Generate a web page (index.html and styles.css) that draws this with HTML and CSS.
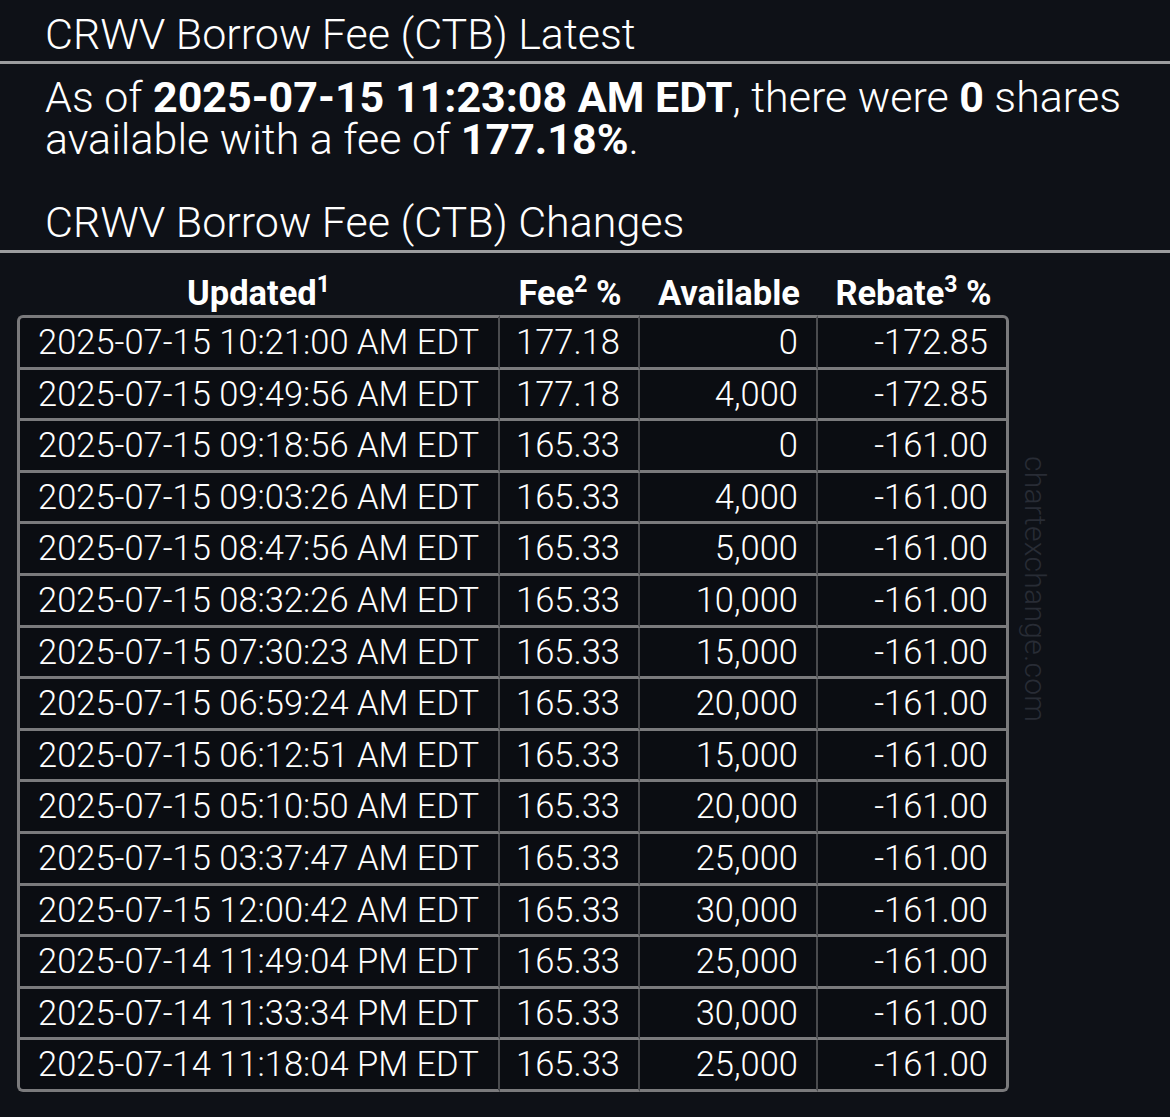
FILE: index.html
```html
<!DOCTYPE html>
<html lang="en">
<head>
<meta charset="utf-8">
<title>CRWV Borrow Fee (CTB)</title>
<link rel="stylesheet" href="styles.css">
</head>
<body>
<div class="page">
  <h2 class="section-title first">CRWV Borrow Fee (CTB) Latest</h2>
  <p class="summary">As of <b>2025-07-15 11:23:08 AM EDT</b>, there were <b>0</b> shares available with a fee of <b>177.18%</b>.</p>
  <h2 class="section-title second">CRWV Borrow Fee (CTB) Changes</h2>
  <div class="table-wrap">
    <table class="fees">
      <thead>
        <tr>
          <th class="c1">Updated<sup>1</sup></th>
          <th class="c2">Fee<sup>2</sup> %</th>
          <th class="c3">Available</th>
          <th class="c4">Rebate<sup>3</sup> %</th>
        </tr>
      </thead>
      <tbody>
        <tr><td>2025-07-15 10:21:00 AM EDT</td><td>177.18</td><td>0</td><td>-172.85</td></tr>
        <tr><td>2025-07-15 09:49:56 AM EDT</td><td>177.18</td><td>4,000</td><td>-172.85</td></tr>
        <tr><td>2025-07-15 09:18:56 AM EDT</td><td>165.33</td><td>0</td><td>-161.00</td></tr>
        <tr><td>2025-07-15 09:03:26 AM EDT</td><td>165.33</td><td>4,000</td><td>-161.00</td></tr>
        <tr><td>2025-07-15 08:47:56 AM EDT</td><td>165.33</td><td>5,000</td><td>-161.00</td></tr>
        <tr><td>2025-07-15 08:32:26 AM EDT</td><td>165.33</td><td>10,000</td><td>-161.00</td></tr>
        <tr><td>2025-07-15 07:30:23 AM EDT</td><td>165.33</td><td>15,000</td><td>-161.00</td></tr>
        <tr><td>2025-07-15 06:59:24 AM EDT</td><td>165.33</td><td>20,000</td><td>-161.00</td></tr>
        <tr><td>2025-07-15 06:12:51 AM EDT</td><td>165.33</td><td>15,000</td><td>-161.00</td></tr>
        <tr><td>2025-07-15 05:10:50 AM EDT</td><td>165.33</td><td>20,000</td><td>-161.00</td></tr>
        <tr><td>2025-07-15 03:37:47 AM EDT</td><td>165.33</td><td>25,000</td><td>-161.00</td></tr>
        <tr><td>2025-07-15 12:00:42 AM EDT</td><td>165.33</td><td>30,000</td><td>-161.00</td></tr>
        <tr><td>2025-07-14 11:49:04 PM EDT</td><td>165.33</td><td>25,000</td><td>-161.00</td></tr>
        <tr><td>2025-07-14 11:33:34 PM EDT</td><td>165.33</td><td>30,000</td><td>-161.00</td></tr>
        <tr><td>2025-07-14 11:18:04 PM EDT</td><td>165.33</td><td>25,000</td><td>-161.00</td></tr>
      </tbody>
    </table>
    <div class="watermark">chartexchange.com</div>
  </div>
</div>
</body>
</html>
```

FILE: styles.css
```css
html, body {
  margin: 0;
  padding: 0;
  background: #0e1117;
}

.page {
  color: #ffffff;
  font-family: Roboto, "Noto Sans", "Liberation Sans", sans-serif;
  font-weight: 300;
  min-height: 1117px;
}

.section-title {
  margin: 0;
  font-size: 43px;
  font-weight: 300;
  line-height: 46px;
  padding-left: 45px;
  border-bottom: 3px solid #9c9d9f;
  white-space: nowrap;
}

.section-title.first {
  padding-top: 11px;
  padding-bottom: 4px;
}

.section-title.second {
  padding-top: 0;
  padding-bottom: 5px;
}

.summary {
  margin: 12px 0 39px 0;
  padding: 0 20px 0 45px;
  font-size: 43px;
  line-height: 42px;
}

.summary b {
  font-weight: 700;
}

.table-wrap {
  position: relative;
  padding: 11px 0 0 17px;
}

.fees {
  border-collapse: separate;
  border-spacing: 0;
  font-size: 34.5px;
}

.fees th {
  font-weight: 700;
  text-align: center;
  line-height: 44px;
  padding: 7px 0 0 0;
  white-space: nowrap;
}

.fees sup {
  font-size: 23px;
  line-height: 0;
  vertical-align: 13px;
}

.fees .c1 { width: 483px; }
.fees .c2 { width: 140px; }
.fees .c3 { width: 178px; }
.fees .c4 { width: 191px; }

.fees td {
  line-height: 48.6px;
  padding: 0 18px 0 14px;
  text-align: right;
  white-space: nowrap;
  border-bottom: 3px solid #7a7a7c;
  border-right: 2px solid #4a4b4e;
  background: #0b0d12;
}

.fees td:first-child {
  text-align: left;
  padding-left: 18px;
  border-left: 3px solid #7a7a7c;
}

.fees td:last-child {
  border-right: 3px solid #7a7a7c;
}

.fees tbody tr:first-child td {
  border-top: 3px solid #7a7a7c;
}

.fees tbody tr:first-child td:first-child { border-top-left-radius: 6px; }
.fees tbody tr:first-child td:last-child { border-top-right-radius: 6px; }
.fees tbody tr:last-child td:first-child { border-bottom-left-radius: 6px; }
.fees tbody tr:last-child td:last-child { border-bottom-right-radius: 6px; }

.watermark {
  position: absolute;
  left: 1018px;
  top: 203px;
  writing-mode: vertical-rl;
  font-size: 30px;
  font-weight: 300;
  color: #282c35;
  letter-spacing: 0.3px;
}
```
